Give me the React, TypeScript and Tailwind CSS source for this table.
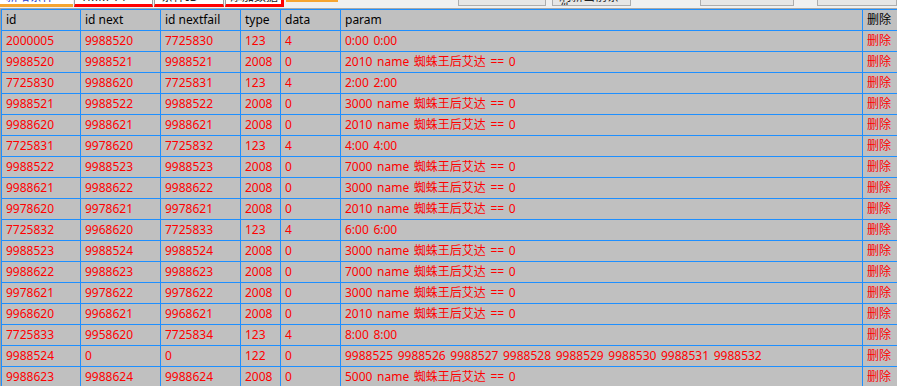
import React from "react";

const NAME = "蜘蛛王后艾达";
const rows: string[][] = [
  ["2000005", "9988520", "7725830", "123", "4", "0:00 0:00"],
  ["9988520", "9988521", "9988521", "2008", "0", `2010 name ${NAME} == 0`],
  ["7725830", "9988620", "7725831", "123", "4", "2:00 2:00"],
  ["9988521", "9988522", "9988522", "2008", "0", `3000 name ${NAME} == 0`],
  ["9988620", "9988621", "9988621", "2008", "0", `2010 name ${NAME} == 0`],
  ["7725831", "9978620", "7725832", "123", "4", "4:00 4:00"],
  ["9988522", "9988523", "9988523", "2008", "0", `7000 name ${NAME} == 0`],
  ["9988621", "9988622", "9988622", "2008", "0", `3000 name ${NAME} == 0`],
  ["9978620", "9978621", "9978621", "2008", "0", `2010 name ${NAME} == 0`],
  ["7725832", "9968620", "7725833", "123", "4", "6:00 6:00"],
  ["9988523", "9988524", "9988524", "2008", "0", `3000 name ${NAME} == 0`],
  ["9988622", "9988623", "9988623", "2008", "0", `7000 name ${NAME} == 0`],
  ["9978621", "9978622", "9978622", "2008", "0", `3000 name ${NAME} == 0`],
  ["9968620", "9968621", "9968621", "2008", "0", `2010 name ${NAME} == 0`],
  ["7725833", "9958620", "7725834", "123", "4", "8:00 8:00"],
  ["9988524", "0", "0", "122", "0", "9988525 9988526 9988527 9988528 9988529 9988530 9988531 9988532"],
  ["9988623", "9988624", "9988624", "2008", "0", `5000 name ${NAME} == 0`],
];

const header = ["id", "id next", "id nextfail", "type", "data", "param", "删除"];

const gridCols = "grid grid-cols-[79px_80px_80px_40px_60px_522px_46px]";
const cell = "flex items-center border-l border-[#1e8fff] pl-[4px] whitespace-nowrap overflow-hidden";

export default function App() {
  return (
    <div className="w-[897px] h-[386px] overflow-hidden bg-[#f0f0f0] font-['Noto_Sans','Noto_Sans_CJK_SC',sans-serif] text-[12px] leading-none">
      {/* top strip (cut-off toolbar) */}
      <div className="h-[9px] flex items-start border-b border-[#a8a8a8] overflow-hidden">
        <div className="w-[73px] h-[7px] bg-white border-b-[3px] border-[#f6a531] overflow-hidden">
          <div className="-mt-[9px] pl-[6px] text-[#1c3ccf]">新增条件</div>
        </div>
        <div className="ml-[1px] w-[80px] h-[7px] bg-white border-x border-[#a0a0a0] border-b-[3px] border-b-[#ff0000] overflow-hidden">
          <div className="-mt-[9px] pl-[6px] text-[#222]">TMM 14</div>
        </div>
        <div className="ml-[1px] w-[70px] h-[7px] bg-white border-x border-[#a0a0a0] border-b-[3px] border-b-[#ff0000] overflow-hidden">
          <div className="-mt-[9px] pl-[6px] text-[#222]">条件ID</div>
        </div>
        <div className="ml-[1px] w-[59px] h-[7px] bg-white border-l border-[#a0a0a0] border-r-[3px] border-r-[#ff0000] border-b-[3px] border-b-[#ff0000] overflow-hidden">
          <div className="-mt-[9px] pl-[4px] text-[#222]">添加数据</div>
        </div>
        <div className="ml-[2px] w-[52px] h-[2px] bg-[#f6a531]" />
        <div className="ml-[120px] w-[89px] h-[6px] bg-[#e6e6e6] border-x border-b border-[#adadad]" />
        <div className="ml-[6px] w-[79px] h-[6px] bg-[#e6e6e6] border-x border-b border-[#adadad] overflow-hidden">
          <div className="-mt-[9px] pl-[6px] text-[#222]">刷新当前条件</div>
        </div>
        <div className="ml-[69px] w-[95px] h-[6px] bg-[#e6e6e6] border-x border-b border-[#adadad]" />
        <div className="ml-[23px] w-[80px] h-[6px] bg-[#e6e6e6] border-x border-b border-[#adadad]" />
      </div>

      {/* table */}
      <div className="border-l border-[#a0a0a0] bg-[#c0c0c0] w-[908px]">
        <div className={`${gridCols} h-[22px] border-y border-[#1e8fff] text-black`}>
          {header.map((h, i) => (
            <div key={i} className={`${cell} ${i === 0 ? "pl-[3px]" : ""}`}>
              {h}
            </div>
          ))}
        </div>
        {rows.map((r, ri) => (
          <div key={ri} className={`${gridCols} h-[21px] border-b border-[#1e8fff] text-[#ff0000]`}>
            {r.map((v, i) => (
              <div key={i} className={`${cell} ${i === 0 ? "pl-[3px]" : ""} ${i === 5 ? "[word-spacing:1.5px]" : ""}`}>
                {v}
              </div>
            ))}
            <div className={cell}>删除</div>
          </div>
        ))}
      </div>
    </div>
  );
}
